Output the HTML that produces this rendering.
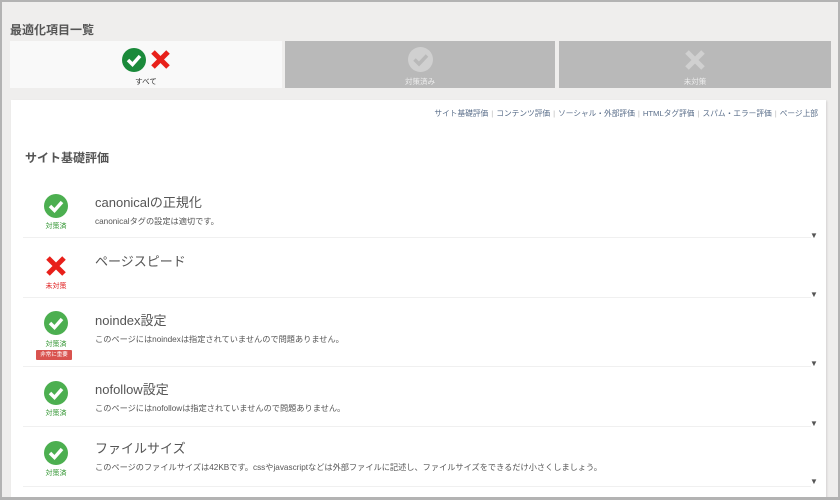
<!DOCTYPE html>
<html><head><meta charset="utf-8"><style>
*{margin:0;padding:0;box-sizing:border-box}
body{width:840px;height:500px;overflow:hidden;background:#b3b3b3;font-family:"Liberation Sans","Noto Sans CJK JP",sans-serif;position:relative}
.frame{position:absolute;left:2px;top:2px;width:836px;height:495px;background:#efeeed;overflow:hidden}
.abs{position:absolute}
.h1{left:8px;top:19px;font-size:12px;font-weight:bold;color:#555}
.tab{position:absolute;top:39px;height:47px;text-align:center;font-size:7.5px}
.card{position:absolute;left:9px;top:98px;width:815px;height:420px;background:#fff;box-shadow:1px 1px 2px rgba(0,0,0,.12)}
.nav{position:absolute;right:8px;top:8px;font-size:7.7px;color:#5a6e8a;white-space:nowrap}
.nav span{color:#bbb;margin:0 3px}
.sec{position:absolute;left:14px;top:49px;font-size:12px;font-weight:bold;color:#555}
.row{position:absolute;left:12px;width:788px;border-bottom:1px solid #f0f0f0}
.ic{position:absolute;left:21px;width:24px;height:24px}
.lab{position:absolute;left:-2px;width:70px;text-align:center;font-size:7px}
.t{position:absolute;left:72px;font-size:13px;color:#555}
.d{position:absolute;left:72px;font-size:8.2px;color:#555;white-space:nowrap}
.arr{position:absolute;left:799px;font-size:8px;color:#555}
.badge{position:absolute;left:13px;width:36px;height:10px;background:#d9534f;color:#fff;font-size:5.5px;text-align:center;line-height:10px;border-radius:1px}
</style></head><body>
<div class="frame">
<div class="abs h1">最適化項目一覧</div>
<div class="tab" style="left:8px;width:272px;background:#f9f9f9;color:#333">
<svg class="abs" style="left:112px;top:7px" width="50" height="24"><circle cx="12" cy="12" r="12" fill="#1a8a3a"/><path d="M6 12l4.5 4.5L18 8" stroke="#fff" stroke-width="3.5" fill="none"/><path d="M31 4l15 15M46 4L31 19" stroke="#e8201a" stroke-width="5"/></svg>
<div class="abs" style="left:0;width:272px;top:35px">すべて</div></div>
<div class="tab" style="left:283px;width:270px;background:#b9b9b9;color:#eee">
<svg class="abs" style="left:123px;top:6px" width="25" height="25"><circle cx="12.5" cy="12.5" r="12.5" fill="#d0d0d0"/><path d="M6.5 12.5l4.5 4.5L19 8.5" stroke="#b9b9b9" stroke-width="3.5" fill="none"/></svg>
<div class="abs" style="left:0;width:270px;top:35px">対策済み</div></div>
<div class="tab" style="left:557px;width:272px;background:#b9b9b9;color:#eee">
<svg class="abs" style="left:126px;top:9px" width="20" height="20"><path d="M2 2l16 16M18 2L2 18" stroke="#d0d0d0" stroke-width="5"/></svg>
<div class="abs" style="left:0;width:272px;top:35px">未対策</div></div>
<div class="card">
<div class="nav">サイト基礎評価<span>|</span>コンテンツ評価<span>|</span>ソーシャル・外部評価<span>|</span>HTMLタグ評価<span>|</span>スパム・エラー評価<span>|</span>ページ上部</div>
<div class="sec">サイト基礎評価</div>
<div class="row" style="top:80px;height:58px">
<svg class="ic" style="top:14px" width="24" height="24"><circle cx="12" cy="12" r="12" fill="#4caf50"/><path d="M6 12l4.5 4.5L18 8" stroke="#fff" stroke-width="3.5" fill="none"/></svg>
<div class="lab" style="top:41px;color:#3a9a3a">対策済</div>
<div class="t" style="top:12px">canonicalの正規化</div>
<div class="d" style="top:35px">canonicalタグの設定は適切です。</div></div>
<div class="arr" style="top:131px">▼</div>
<div class="row" style="top:139px;height:59px">
<svg class="ic" style="top:17px" width="24" height="20"><path d="M4 2l16 16M20 2L4 18" stroke="#e8201a" stroke-width="5"/></svg>
<div class="lab" style="top:42px;color:#e02020">未対策</div>
<div class="t" style="top:12px">ページスピード</div></div>
<div class="arr" style="top:190px">▼</div>
<div class="row" style="top:198px;height:69px">
<svg class="ic" style="top:13px" width="24" height="24"><circle cx="12" cy="12" r="12" fill="#4caf50"/><path d="M6 12l4.5 4.5L18 8" stroke="#fff" stroke-width="3.5" fill="none"/></svg>
<div class="lab" style="top:41px;color:#3a9a3a">対策済</div>
<div class="badge" style="top:52px">非常に重要</div>
<div class="t" style="top:12px">noindex設定</div>
<div class="d" style="top:35px">このページにはnoindexは指定されていませんので問題ありません。</div></div>
<div class="arr" style="top:259px">▼</div>
<div class="row" style="top:267px;height:60px">
<svg class="ic" style="top:14px" width="24" height="24"><circle cx="12" cy="12" r="12" fill="#4caf50"/><path d="M6 12l4.5 4.5L18 8" stroke="#fff" stroke-width="3.5" fill="none"/></svg>
<div class="lab" style="top:41px;color:#3a9a3a">対策済</div>
<div class="t" style="top:12px">nofollow設定</div>
<div class="d" style="top:35px">このページにはnofollowは指定されていませんので問題ありません。</div></div>
<div class="arr" style="top:319px">▼</div>
<div class="row" style="top:327px;height:60px">
<svg class="ic" style="top:14px" width="24" height="24"><circle cx="12" cy="12" r="12" fill="#4caf50"/><path d="M6 12l4.5 4.5L18 8" stroke="#fff" stroke-width="3.5" fill="none"/></svg>
<div class="lab" style="top:41px;color:#3a9a3a">対策済</div>
<div class="t" style="top:11px">ファイルサイズ</div>
<div class="d" style="top:34px">このページのファイルサイズは42KBです。cssやjavascriptなどは外部ファイルに記述し、ファイルサイズをできるだけ小さくしましょう。</div></div>
<div class="arr" style="top:377px">▼</div>
</div>
</div>
</body></html>
